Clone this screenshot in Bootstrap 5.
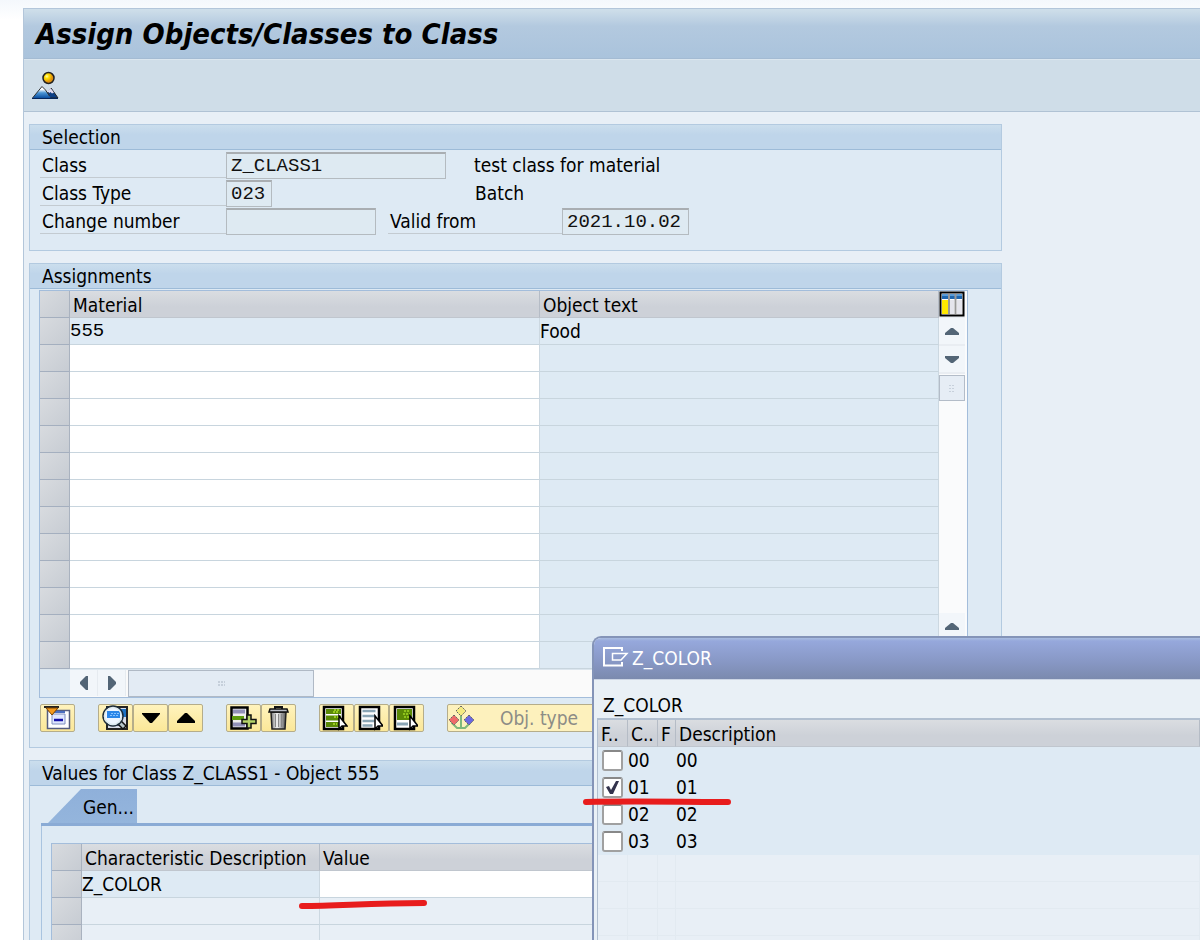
<!DOCTYPE html>
<html lang="en">
<head>
<meta charset="utf-8">
<meta name="viewport" content="width=device-width, initial-scale=1">
<title>Assign Objects/Classes to Class</title>
<link href="https://cdn.jsdelivr.net/npm/bootstrap@5.3.0/dist/css/bootstrap.min.css" rel="stylesheet">
<style>
  :root { --ui: "DejaVu Sans Condensed", "Noto Sans", sans-serif; --data: "Liberation Mono", monospace; --row: 27px; }
  body { font: 19px/26px var(--ui); color: #000; background: #fff; }
  .desktop { height: 100vh; padding: 8px 0 0 23px; background: linear-gradient(#f4f8fc, #fff 20px); }
  .session { background: #e8eff6; border: 1px solid #b3c6da; border-width: 1px 0 0 1px; min-height: 100%; }
  .title-bar { height: 50px; padding-left: 12px; background: linear-gradient(#cfdfea, #b3c9df 35%, #aac3dc); border-bottom: 1px solid #a4bbd3; }
  .title-bar h1 { font: italic bold 29px/50px var(--ui); margin: 0; }
  .app-bar { height: 53px; padding: 11px 8px 0 6px; background: #cfdde8; border-bottom: 1px solid #b0c2d4; border-top: 1px solid #dbe6ef; }
  .work { padding: 12px 5px 0; }
  .panel { max-width: 973px; background: #deeaf4; border: 1px solid #b3cae0; }
  .panel + .panel { margin-top: 12px; }
  .panel > h2 { font: 19px/25px var(--ui); height: 25px; margin: 0; padding-left: 12px; background: linear-gradient(#cbdeed, #bfd5ea 40%); border-bottom: 1px solid #9dbbd8; }

  .sel-form { padding: 2px 0 14px; }
  .form-line { height: 28px; padding-left: 10px; }
  .form-line label { height: 26px; padding-left: 2px; border-bottom: 1px solid #c3cbd1; }
  .form-line input { height: 27px; padding: 0 4px; font: 19px/24px var(--data); background: #deeaf2; color: #111; border: 1px solid #b4bbc0; border-top: 2px solid #a9aeb2; border-radius: 0; outline: 0; }
  .w-label { width: 186px; } .w-long { width: 220px; } .w-short { width: 46px; } .w-num { width: 150px; }
  .w-date { width: 127px; } .w-from { width: 174px; margin-left: 12px; }
  .batch { margin-left: 203px; }

  .grid-box { border: 1px solid #a3bddb; }
  .wide-box { margin: 1px 33px 0 9px; }
  table.sheet { table-layout: fixed; border-collapse: separate; border-spacing: 0; width: 100%; }
  .sheet th, .sheet td { height: var(--row); line-height: 26px; padding: 0; font-weight: 400; border-bottom: 1px solid #c8d5de; border-right: 1px solid #ccd8e1; overflow: hidden; white-space: nowrap; }
  .sheet thead th { background: linear-gradient(#dadde1, #cdd1d8 60%); border-bottom-color: #c0c6ce; border-right-color: #b5bcc6; padding: 2px 0 0 3px; line-height: 24px; }
  .sheet .sel { width: 30px; background: linear-gradient(135deg, #d8dbdf, #c7ccd3); border-bottom-color: #a4afbf; border-right-color: #a9b2bf; }
  .sheet .edit { background: #fff; }
  .sheet td input.cell { display: block; width: 100%; height: 26px; padding: 0; border: 0; outline: 0; background: transparent; font: inherit; }
  .sheet .mono { font-family: var(--data); }

  .v-scroll { width: 28px; padding-right: 2px; background: #fafbfc; }
  .sbtn { display: block; width: 100%; height: 28px; padding: 0; border: 0; border-bottom: 2px solid #e9edf2; background: #f2f6fa; line-height: 0; text-align: center; }
  .sbtn.cfg { height: 27px; border-bottom-width: 1px; text-align: left; }
  .v-thumb { height: 26px; margin: 1px 0; background: #e6edf5; border: 1px solid #b3bcc8; }
  .h-scroll { height: 28px; background: #fafafa; border-top: 1px solid #dce6ee; }
  .h-scroll .sbtn { width: 28px; height: 26px; border: 0; border-right: 1px solid #e6ebf0; }
  .h-thumb { width: 186px; background: #e3ebf4; border: 1px solid #b0b9c5; margin-left: 2px; }
  .corner { width: 30px; background: #deeaf4; }

  .tool { width: 35px; height: 28px; padding: 0; background: linear-gradient(#fff3bd, #fbe798); border: 1px solid #b5ad8a; border-radius: 2px; line-height: 0; display: flex; align-items: center; justify-content: center; }
  .tool.flush { justify-content: flex-start; }
  .tool-text { width: 160px; font: 19px/24px var(--ui); color: #8c8c86; justify-content: flex-start; background: #fdf1bd; }
  .obj { margin-left: 24px; }
  .tool-row { gap: 23px; padding: 6px 0 15px 10px; }
  svg { flex: none; }

  .tabs { height: 40px; padding: 3px 0 0 18px; border-bottom: 3px solid #8aabd5; margin-left: 11px; }
  .tab { display: block; width: 89px; height: 34px; border: 0; padding: 0 0 0 35px; font: 19px/36px var(--ui); text-align: left; background: linear-gradient(#8fb0da, #94b5dc); clip-path: polygon(33px 0, 100% 0, 100% 100%, 0 100%); white-space: nowrap; margin-left: -11px; }
  .tab-body { margin-left: 11px; border-left: 1px solid #a9c4e0; padding: 17px 0 0 9px; }
  .sheet .idle { background: #e8eff6; }

  .popup { position: absolute; z-index: 5; left: 592px; right: 0; top: 636px; bottom: 0; background: #e9f0f6; border: 2px solid #8494b8; border-width: 2px 0 0 2px; border-radius: 9px 0 0 0; overflow: hidden; }
  .popup-head { height: 42px; padding-left: 9px; color: #fff; background: linear-gradient(#a9bde0 0, #96a8dc 3px, #8797c4 60%, #7b8aae); border-bottom: 1px solid #ccd5e5; }
  .popup-head h2 { font: 19px/38px var(--ui); margin: 0 0 2px 3px; }
  .popup-head svg { margin-bottom: 4px; }
  .popup-body { padding: 12px 0 0 3px; }
  .popup-body h3 { font: 19px/26px var(--ui); margin: 0 0 0 6px; }
  .hits { border: 1px solid #b1bfd0; border-width: 2px 0 0 1px; }
  .hits .sheet td { background: #deeaf4; border-color: #deeaf4; }
  .hits .sheet tr.idle-row td { background: #e8eff6; border-color: #e2eaf1; }
  .tick { appearance: none; display: block; width: 21px; height: 21px; margin: 0 0 0 4px; background: #fff; border: 2px solid #a0a0a0; border-top-color: #888; border-radius: 3px; }
  .tick:checked { background: #fff url("data:image/svg+xml,%3Csvg xmlns='http://www.w3.org/2000/svg' viewBox='0 0 17 17'%3E%3Cpath d='M2 8l3-1 2 4 5-9h3L9 15H6z' fill='%2333334d'/%3E%3C/svg%3E") center/17px; }
  .stroke { position: absolute; z-index: 6; pointer-events: none; }
  .stroke-a { left: 299px; top: 898px; } .stroke-b { left: 583px; top: 797px; }
</style>
</head>
<body>
<div class="desktop position-relative overflow-hidden">
  <div class="session">
    <header class="title-bar"><h1>Assign Objects/Classes to Class</h1></header>
    <div class="app-bar">
      <button type="button" class="btn p-0 border-0 d-block lh-1" aria-label="Overview">
        <svg width="30" height="30" viewBox="0 0 30 30"><defs><radialGradient id="sun" cx=".35" cy=".35"><stop offset="0" stop-color="#fffbb0"/><stop offset=".4" stop-color="#ffe000"/><stop offset="1" stop-color="#e09010"/></radialGradient><linearGradient id="hill" x2="0" y2="1"><stop offset=".25" stop-color="#fff"/><stop offset=".55" stop-color="#4b95d6"/><stop offset="1" stop-color="#0a4ea0"/></linearGradient></defs><circle cx="18.500" cy="7" r="5.500" fill="url(#sun)" stroke="#222" stroke-width="1.500"/><path d="M14 27l7-10 7 10z" fill="#0d3f85" stroke="#222"/><path d="M17.500 20.500l3-3.500 3.500 4.500-2 1-1.500-1.500-1 1z" fill="#e2dcf0"/><path d="M2.500 27L12 15.500l3.500 3.500 5 8z" fill="url(#hill)"/><path d="M2.500 27L12 15.500l3.500 3.500 4 6" fill="none" stroke="#333"/><path d="M2 27.500h26" stroke="#06265c"/></svg>
      </button>
    </div>
    <main class="work">
      <section class="panel">
        <h2>Selection</h2>
        <form class="sel-form">
          <div class="form-line d-flex"><label class="w-label" for="cls">Class</label><input id="cls" class="w-long" value="Z_CLASS1" readonly><span class="ms-4 ps-1">test class for material</span></div>
          <div class="form-line d-flex"><label class="w-label" for="ctype">Class Type</label><input id="ctype" class="w-short" value="023" readonly><span class="batch">Batch</span></div>
          <div class="form-line d-flex"><label class="w-label" for="chg">Change number</label><input id="chg" class="w-num" readonly><label class="w-from" for="from">Valid from</label><input id="from" class="w-date" value="2021.10.02" readonly></div>
        </form>
      </section>

      <section class="panel">
        <h2>Assignments</h2>
        <div class="grid-box wide-box">
          <div class="d-flex">
            <div class="flex-grow-1">
              <table class="sheet" id="objects">
                <colgroup><col style="width:30px"><col style="width:470px"><col></colgroup>
                <thead><tr><th class="sel" aria-label="Select"></th><th>Material</th><th>Object text</th></tr></thead>
                <tbody><tr><td class="sel"></td><td class="mono">555</td><td>Food</td></tr></tbody>
              </table>
            </div>
            <div class="v-scroll d-flex flex-column">
              <button type="button" class="sbtn cfg" aria-label="Configure columns"><svg width="26" height="26" viewBox="0 0 26 26"><path d="M1.500 1.500h23v23h-23z" fill="#fff" stroke="#000" stroke-width="2"/><path d="M3 3h20v5H3z" fill="#1f67b0"/><path d="M3 3h20v2H3z" fill="#5a9cd8"/><path d="M3 9h6v14H3z" fill="#ffe800"/><path d="M11 9h4v14h-4zM18 9h5v14h-5z" fill="#e5e5ec"/><path d="M10 3v20M16.500 3v20" stroke="#999" stroke-width="2"/></svg></button>
              <button type="button" class="sbtn" aria-label="Scroll up"><svg width="14" height="7" viewBox="0 0 14 7"><path d="M6 0h2l6 5v2H0V5z" fill="#536576"/></svg></button>
              <button type="button" class="sbtn" aria-label="Scroll down"><svg width="14" height="7" viewBox="0 0 14 7"><path d="M0 0h14v2L8 7H6L0 2z" fill="#536576"/></svg></button>
              <div class="v-thumb d-flex align-items-center justify-content-center"><svg width="6" height="7"><path d="M1 0v7M4 0v7" stroke="#a9b4c2" stroke-dasharray="1 2"/></svg></div>
              <div class="flex-grow-1"></div>
              <button type="button" class="sbtn" aria-label="Page up"><svg width="14" height="7" viewBox="0 0 14 7"><path d="M6 0h2l6 5v2H0V5z" fill="#536576"/></svg></button>
              <button type="button" class="sbtn" aria-label="Page down"><svg width="14" height="7" viewBox="0 0 14 7"><path d="M0 0h14v2L8 7H6L0 2z" fill="#536576"/></svg></button>
            </div>
          </div>
          <div class="h-scroll d-flex">
            <div class="corner"></div>
            <button type="button" class="sbtn" aria-label="Scroll left"><svg width="8" height="14" viewBox="0 0 8 14"><path d="M0 6l6-6h2v14H6L0 8z" fill="#536576"/></svg></button>
            <button type="button" class="sbtn" aria-label="Scroll right"><svg width="8" height="14" viewBox="0 0 8 14"><path d="M8 6L2 0H0v14h2l6-6z" fill="#536576"/></svg></button>
            <div class="h-thumb d-flex align-items-center justify-content-center"><svg width="7" height="6"><path d="M0 1h7M0 4h7" stroke="#a9b4c2" stroke-dasharray="2 1"/></svg></div>
          </div>
        </div>
        <div class="tool-row d-flex">
          <button type="button" class="tool" aria-label="Filter"><svg width="28" height="24" viewBox="0 0 28 24"><path d="M3.500 4.500h22v18h-22z" fill="#fff" stroke="#555d80" stroke-width="1.500"/><path d="M8 8h13v10H8z" fill="#dfe7ff" stroke="#8090c0"/><path d="M8 6h13" stroke="#4b6fc0" stroke-width="2"/><path d="M10 14h9" stroke="#1410a8" stroke-width="2.500"/><path d="M0 1h15" stroke="#222" stroke-width="2"/><path d="M2 2h12L8 9z" fill="#f59a1c" stroke="#7a4500"/></svg></button>
          <div class="d-flex">
            <button type="button" class="tool flush" aria-label="Find"><svg width="30" height="26" viewBox="0 0 30 26"><path d="M8 2h20v22H8z" fill="#d8dce8" stroke="#222" stroke-width="2"/><path d="M18 4h9v8h-9z" fill="#1d72c4"/><path d="M10 20h15" stroke="#6c7390" stroke-width="2"/><path d="M19 16l7 7" stroke="#111" stroke-width="6"/><path d="M19 16l6 6" stroke="#b5c5ca" stroke-width="3"/><circle cx="14" cy="11" r="8.500" fill="#eef5ff"/><path d="M8 6h13v7H8z" fill="#2b86e8"/><path d="M12 8.500h8M11 10.500h8" stroke="#87c2ff" stroke-dasharray="2 1"/><circle cx="14" cy="11" r="10" fill="none" stroke="#1c2b38" stroke-width="1.500"/><circle cx="14" cy="11" r="8.500" fill="none" stroke="#dce9ef" stroke-width="1.500"/></svg></button>
            <button type="button" class="tool" aria-label="Next"><svg width="18" height="10"><path d="M0 0h18v1L10 10H8L0 1z"/></svg></button>
            <button type="button" class="tool" aria-label="Previous"><svg width="18" height="10"><path d="M8 0h2l8 8v2H0V8z"/></svg></button>
          </div>
          <div class="d-flex">
            <button type="button" class="tool flush" aria-label="Insert row"><svg width="30" height="26" viewBox="0 0 30 26"><path d="M4.500 2.500h16v21h-16z" fill="#eee" stroke="#000" stroke-width="2.500"/><path d="M6 6.500h12M6 19.500h12" stroke="#9190b8" stroke-width="4"/><path d="M5 13h12" stroke="#5f9c10" stroke-width="4"/><path d="M20 10h4v4.500h5v4h-5V23h-4v-4.500h-5v-4h5z" fill="#b4d36a" stroke="#111" stroke-width="1.500"/></svg></button>
            <button type="button" class="tool" aria-label="Delete"><svg width="24" height="26" viewBox="0 0 24 26"><defs><linearGradient id="bin"><stop stop-color="#777"/><stop offset=".4" stop-color="#f3f3f3"/><stop offset="1" stop-color="#555"/></linearGradient></defs><path d="M4 7h15l-1 17H5z" fill="url(#bin)" stroke="#222" stroke-width="1.500"/><path d="M8.500 9v13M11.500 9v13M14.500 9v13" stroke="#888"/><path d="M3 4h17l1 3H2z" fill="#b9bcc4" stroke="#111" stroke-width="1.500"/><path d="M8 4V2h7v2" fill="none" stroke="#111" stroke-width="2"/></svg></button>
          </div>
          <div class="d-flex">
            <button type="button" class="tool flush" aria-label="Select all"><svg width="28" height="26" viewBox="0 0 28 26"><path d="M4 2h19v22H4z" fill="#fff" stroke="#000" stroke-width="2.500"/><path d="M6 4h15v5H6zM6 10.500h15v5H6zM6 17h15v5H6z" fill="#5b8a06"/><path d="M14 5h5M13 7h6M14 12h6M13 19h4" stroke="#98cc1e" stroke-width="2" stroke-dasharray="2 1"/><path d="M19 11v13l3-3h5z" fill="#fff" stroke="#000" stroke-width="1.500"/></svg></button>
            <button type="button" class="tool flush" aria-label="Select block"><svg width="28" height="26" viewBox="0 0 28 26"><path d="M5 2h19v22H5z" fill="#fff" stroke="#000" stroke-width="2.500"/><path d="M7.500 6h13M7.500 11h13M7.500 16h12M7.500 20.500h10" stroke="#8aa5b5" stroke-width="2.500"/><path d="M20 11v13l3-3h5z" fill="#fff" stroke="#000" stroke-width="1.500"/></svg></button>
            <button type="button" class="tool flush" aria-label="Deselect all"><svg width="28" height="26" viewBox="0 0 28 26"><path d="M5 2h19v22H5z" fill="#fff" stroke="#000" stroke-width="2.500"/><path d="M7 4h15v11H7z" fill="#5b8a06"/><path d="M14 6h6M13 9h7M14 12h6" stroke="#8fc31c" stroke-width="2" stroke-dasharray="2 1"/><path d="M7 19h11" stroke="#8aa5b5" stroke-width="3"/><path d="M20 11v13l3-3h5z" fill="#fff" stroke="#000" stroke-width="1.500"/></svg></button>
          </div>
          <button type="button" class="tool tool-text"><svg width="28" height="26" viewBox="0 0 28 26"><path d="M13 8v16M4 15v3l5 5h8l5-5v-3" fill="none" stroke="#7fb87c" stroke-width="2"/><g stroke="#666" stroke-dasharray="2 1"><path d="M13 1l5 5-5 5-5-5z" fill="#f5ea80"/><path d="M6 10l5 5-5 5-5-5z" fill="#ee6a6a"/><path d="M21 10l5 5-5 5-5-5z" fill="#6a68e0"/></g></svg><span class="obj">Obj. type</span></button>
        </div>
      </section>

      <section class="panel">
        <h2>Values for Class Z_CLASS1 - Object 555</h2>
        <div class="tabs" role="tablist"><button type="button" class="tab" role="tab" aria-selected="true">Gen...</button></div>
        <div class="tab-body">
          <div class="grid-box">
            <table class="sheet">
              <colgroup><col style="width:30px"><col style="width:238px"><col></colgroup>
              <thead><tr><th class="sel" aria-label="Select"></th><th>Characteristic Description</th><th>Value</th></tr></thead>
              <tbody>
                <tr><td class="sel"></td><td>Z_COLOR</td><td class="edit"><input class="cell" aria-label="Value of Z_COLOR"></td></tr>
                <tr><td class="sel"></td><td class="idle"></td><td class="idle"></td></tr>
                <tr><td class="sel"></td><td class="idle"></td><td class="idle"></td></tr>
              </tbody>
            </table>
          </div>
        </div>
      </section>
    </main>
  </div>

  <section class="popup" role="dialog" aria-labelledby="pop-title">
    <div class="popup-head d-flex align-items-center">
      <svg width="26" height="20" viewBox="0 0 26 20"><path d="M19 4V1H1v17.500h18V15" fill="none" stroke="#fff" stroke-width="2"/><path d="M9.500 6.500H24L18 13H9.500z" fill="none" stroke="#fff" stroke-width="1.500"/></svg>
      <h2 id="pop-title">Z_COLOR</h2>
    </div>
    <div class="popup-body">
      <h3>Z_COLOR</h3>
      <div class="hits">
        <table class="sheet">
          <colgroup><col style="width:30px"><col style="width:30px"><col style="width:18px"><col></colgroup>
          <thead><tr><th>F..</th><th>C..</th><th>F</th><th>Description</th></tr></thead>
          <tbody>
            <tr><td><input class="tick" type="checkbox" aria-label="00"></td><td>00</td><td></td><td>00</td></tr>
            <tr><td><input class="tick" type="checkbox" aria-label="01" checked></td><td>01</td><td></td><td>01</td></tr>
            <tr><td><input class="tick" type="checkbox" aria-label="02"></td><td>02</td><td></td><td>02</td></tr>
            <tr><td><input class="tick" type="checkbox" aria-label="03"></td><td>03</td><td></td><td>03</td></tr>
            <tr class="idle-row"><td></td><td></td><td></td><td></td></tr>
            <tr class="idle-row"><td></td><td></td><td></td><td></td></tr>
            <tr class="idle-row"><td></td><td></td><td></td><td></td></tr>
            <tr class="idle-row"><td></td><td></td><td></td><td></td></tr>
          </tbody>
        </table>
      </div>
    </div>
  </section>

  <svg class="stroke stroke-a" width="130" height="12"><path d="M3 8C40 8 70 5 125 5" fill="none" stroke="#e81c1c" stroke-width="6" stroke-linecap="round"/></svg>
  <svg class="stroke stroke-b" width="150" height="10"><path d="M3 5C50 4 100 5 145 5" fill="none" stroke="#e81c1c" stroke-width="6" stroke-linecap="round"/></svg>
</div>
<script>
  const body = document.querySelector('#objects tbody');
  for (let i = 2; i <= 13; i++) {
    body.insertAdjacentHTML('beforeend', `<tr><td class="sel"></td><td class="edit"><input class="cell mono" aria-label="Material, row ${i}"></td><td></td></tr>`);
  }
</script>
<script src="https://cdn.jsdelivr.net/npm/bootstrap@5.3.0/dist/js/bootstrap.bundle.min.js"></script>
</body>
</html>
